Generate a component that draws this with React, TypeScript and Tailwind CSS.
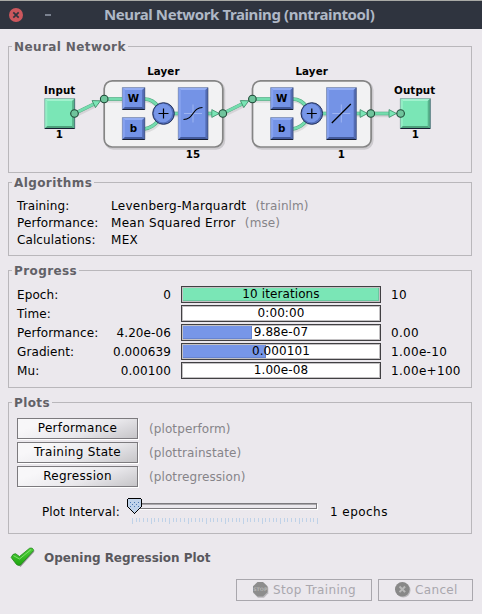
import React from "react";

function Panel({ title, className, children }: { title: string; className: string; children: React.ReactNode }) {
  return (
    <section className={`relative mx-2 w-[464px] shrink-0 border border-[#b9b7bb] ${className}`}>
      <h2 className="absolute -top-[7px] left-[3px] bg-[#ebe8ed] pr-[2px] pl-[2px] text-[12px] leading-[15px] font-bold tracking-[0.4px] text-[#626167]">
        {title}
      </h2>
      {children}
    </section>
  );
}

function Bevel({ x, y, w, h, tone }: { x: number; y: number; w: number; h: number; tone: "green" | "blue" }) {
  const c =
    tone === "green"
      ? { face: "#7ae6b6", light: "#a0f2cd", left: "#93eec5", dark: "#58b48c", bottom: "#4da07b" }
      : { face: "#7493e6", light: "#93adf3", left: "#86a2ef", dark: "#536cb3", bottom: "#435a9c" };
  const b = 2.6;
  return (
    <g>
      <rect x={x} y={y} width={w} height={h} fill={c.face} />
      <path d={`M${x} ${y}h${w}l${-b} ${b}h${-(w - 2 * b)}z`} fill={c.light} />
      <path d={`M${x} ${y}v${h}l${b} ${-b}v${-(h - 2 * b)}z`} fill={c.left} />
      <path d={`M${x + w} ${y}v${h}l${-b} ${-b}v${-(h - 2 * b)}z`} fill={c.dark} />
      <path d={`M${x} ${y + h}h${w}l${-b} ${-b}h${-(w - 2 * b)}z`} fill={c.bottom} />
      <path d={`M${x} ${y + h}H${x + w}`} stroke="#151c30" strokeWidth="1" />
      <path d={`M${x + w} ${y}V${y + h}`} stroke="#33405f" strokeWidth="0.6" />
      <path d={`M${x} ${y + h}V${y}H${x + w}`} fill="none" stroke="#77808f" strokeWidth="0.5" />
    </g>
  );
}

function Wire({ d }: { d: string }) {
  return (
    <g fill="none">
      <path d={d} stroke="#000" strokeOpacity="0.09" strokeWidth="3.5" transform="translate(1.2 2)" />
      <path d={d} stroke="#4fa37c" strokeWidth="3.6" />
      <path d={d} stroke="#74dcae" strokeWidth="2.6" />
    </g>
  );
}

function Port({ x, y }: { x: number; y: number }) {
  return <circle cx={x} cy={y} r="3.8" fill="#6fc49c" stroke="#1f4a38" strokeWidth="1.1" />;
}

function Arrow({ x, y, angle = 0 }: { x: number; y: number; angle?: number }) {
  return (
    <path
      d="M0 0L-7.500 -3.900V3.900Z"
      transform={`translate(${x} ${y}) rotate(${angle})`}
      fill="#7ae6b6"
      stroke="#3f8a68"
      strokeWidth="0.8"
    />
  );
}

function Layer({ x, size, curve }: { x: number; size: string; curve: string }) {
  return (
    <g transform={`translate(${x} 0)`}>
      <rect x="1.5" y="82" width="118.5" height="66.5" rx="8" fill="none" stroke="#000" strokeOpacity="0.13" strokeWidth="2.5" />
      <rect x="0.2" y="80.8" width="118.6" height="66.2" rx="8" fill="#f2f2f3" stroke="#858585" strokeWidth="1.7" />
      <Wire d="M0 99H20" />
      <Wire d="M40 99C48 99 51 103 56 108" />
      <Wire d="M40 129C48 128 51 124 56 119" />
      <Wire d="M68 113.5H75" />
      <Wire d="M103 113.5H109" />
      <Bevel x={18.3} y={87.5} w={22.5} h={22} tone="blue" />
      <Bevel x={18.3} y={117.5} w={22.5} h={22} tone="blue" />
      <text x="29.5" y="102" textAnchor="middle">W</text>
      <text x="29.5" y="132" textAnchor="middle">b</text>
      <circle cx="59.5" cy="113.5" r="10.8" fill="#5470bd" stroke="#24325c" strokeWidth="1" />
      <circle cx="59" cy="113" r="9.2" fill="#7796e8" />
      <path d="M54.5 113.5h10M59.5 108.5v10" stroke="#000" strokeWidth="1.2" />
      <Bevel x={74.2} y={87.5} w={29.8} h={52} tone="blue" />
      <path d="M80 113.5h18M89 104.500v18" stroke="#a7bcf5" strokeWidth="0.8" />
      <path d={curve} fill="none" stroke="#000" strokeWidth="1.2" />
      <Arrow x={115.300} y={113.5} />
      <text x="59.400" y="75" textAnchor="middle">Layer</text>
      <text x="89" y="158" textAnchor="middle">{size}</text>
    </g>
  );
}

function NetworkDiagram() {
  return (
    <svg
      className="block h-[125px] w-[462px] text-[10.3px] font-bold"
      viewBox="9 47 462 125"
      fill="#000"
    >
      <Layer x={104} size="15" curve="M79.500 119.500C90 119.500 88 107.500 98.500 107.500" />
      <Layer x={252.300} size="1" curve="M79.500 123L98.500 104" />
      <Bevel x={44.7} y={98.5} w={30} h={30} tone="green" />
      <text x="59.700" y="94" textAnchor="middle">Input</text>
      <text x="59.400" y="138" textAnchor="middle">1</text>
      <Wire d="M74.500 113.500L95 103.500" />
      <Arrow x={100.500} y={100.800} angle={-26} />
      <Port x={74.5} y={113.5} />
      <Port x={104.2} y={99} />
      <Wire d="M222.700 113.500L243 103.500" />
      <Arrow x={248.800} y={100.800} angle={-26} />
      <Port x={222.800} y={113.5} />
      <Port x={252.400} y={99} />
      <Wire d="M371 113.500H390" />
      <Arrow x={396.500} y={113.5} />
      <Bevel x={400.300} y={98.5} w={30} h={30} tone="green" />
      <Port x={370.800} y={113.5} />
      <Port x={400.600} y={113.5} />
      <text x="414.700" y="94" textAnchor="middle">Output</text>
      <text x="415.300" y="138" textAnchor="middle">1</text>
    </svg>
  );
}

function AlgorithmRow({ label, value, note }: { label: string; value: string; note?: string }) {
  return (
    <div className="flex h-[17px]">
      <span className="w-[94px]">{label}</span>
      <span className="tracking-[0.3px]">{value}</span>
      {note && <span className="ml-[9px] text-[#868489]">{note}</span>}
    </div>
  );
}

type Metric = { label: string; start: string; text: string; end: string; fill: number; green?: boolean };

const metrics: Metric[] = [
  { label: "Epoch:", start: "0", text: "10 iterations", end: "10", fill: 196, green: true },
  { label: "Time:", start: "", text: "0:00:00", end: "", fill: 0 },
  { label: "Performance:", start: "4.20e-06", text: "9.88e-07", end: "0.00", fill: 69 },
  { label: "Gradient:", start: "0.000639", text: "0.000101", end: "1.00e-10", fill: 83 },
  { label: "Mu:", start: "0.00100", text: "1.00e-08", end: "1.00e+100", fill: 0 },
];

function MetricRow({ label, start, text, end, fill, green }: Metric) {
  return (
    <div className="flex h-[17px] leading-[19px]">
      <span className="w-[84px]">{label}</span>
      <span className="w-[70px] text-right">{start}</span>
      <div className="relative ml-[10px] h-[17px] w-[200px] border border-[#414043] bg-white">
        <div className="h-[15px] border border-[#c3c1c3]">
          <div
            className={`h-[13px] ${green ? "bg-[#7ae6b6] shadow-[inset_-1px_-1px_0_#69c9a0]" : "bg-[#7796e8] shadow-[inset_-1px_-1px_0_#6784d1]"}`}
            style={{ width: fill }}
          />
        </div>
        <span className="absolute inset-0 text-center leading-[15px]">{text}</span>
      </div>
      <span className="ml-[10px] tracking-[0.3px]">{end}</span>
    </div>
  );
}

function PlotRow({ label, note }: { label: string; note: string }) {
  return (
    <div className="flex h-[21px] items-center">
      <button className="h-[21px] w-[121px] border border-[#7c7a7e] bg-linear-160 from-[#f8f7f9] from-20% via-[#e9e8ec] via-60% to-[#c6c5c8] text-center leading-[19px] tracking-[0.3px] shadow-[1px_1px_0_#fff]">
        {label}
      </button>
      <span className="ml-[11px] pt-[2px] text-[#868489]">{note}</span>
    </div>
  );
}

function IntervalSlider() {
  const ticks = Array.from({ length: 51 }, (_, i) => i);
  return (
    <svg className="block h-[28px] w-[194px]" viewBox="126 497 194 28" shapeRendering="crispEdges">
      <path d="M135 509.500H317.500V504" fill="none" stroke="#fff" />
      <rect x="134.500" y="503.500" width="182" height="5" fill="#ebe8ed" stroke="#7c7a7e" />
      <path d="M135 504.500H316" stroke="#aaa8ac" />
      {ticks.map((i) => (
        <rect key={i} x={Math.round(132 + i * 3.7)} y="518" width="1" height={i % 5 === 0 ? 6 : 4} fill="#bfd2e8" />
      ))}
      <path d="M128.500 498.500H140.500L141.500 499.500V506.500L134.500 513.500L127.500 506.500V499.500Z" fill="#c0d3ea" stroke="#000" />
      <path
        d="M130 502h1M134 502h1M138 502h1M132 504h1M136 504h1M130 506h1M134 506h1M138 506h1"
        transform="translate(0 .5)"
        stroke="#4b78b4"
      />
    </svg>
  );
}

function CheckIcon() {
  return (
    <svg className="block h-[22px] w-[26px]" viewBox="10 546 26 22">
      <defs>
        <linearGradient id="check" x1="0" y1="0" x2="0" y2="1">
          <stop offset="0" stopColor="#4fd03a" />
          <stop offset="1" stopColor="#1fa511" />
        </linearGradient>
      </defs>
      <path d="M12.500 559L15.500 555.500L20 558.500L30.500 549L34.500 551.500L20.500 567Z" fill="#555" opacity=".55" />
      <path d="M11.200 557.500Q12.500 553.500 15.500 553.700L19.500 556.500L29.500 548.300Q33 547.300 33.700 550.500L20.500 565Q18.500 566 16.500 564.500Z" fill="url(#check)" stroke="#208419" strokeWidth=".8" />
      <path d="M13.500 555.700L19.500 559L31 549.600" fill="none" stroke="#84e474" strokeWidth=".9" />
    </svg>
  );
}

function StopIcon() {
  return (
    <svg className="block h-[18px] w-[18px]" viewBox="0 0 18 18">
      <path d="M6 2.300h6l4.300 4.500v5.500L12 16.800H6L1.800 12.500V7z" fill="#bbb9bd" />
      <path d="M5.500 1h5.500L15.500 5.300v6L11 15.500H5.500L1 11.300v-6z" fill="#8d8d8d" />
      <text x="8.300" y="10" textAnchor="middle" fontSize="4.800" fontWeight="bold" fill="#b5b5b5" letterSpacing="0">STOP</text>
    </svg>
  );
}

function CancelIcon() {
  return (
    <svg className="block h-[18px] w-[18px]" viewBox="0 0 18 18">
      <circle cx="9.300" cy="9.300" r="7.200" fill="#bbb9bd" />
      <circle cx="8.300" cy="8.300" r="7.300" fill="#888" />
      <path d="M5.500 5.500l5.600 5.600M11.100 5.500l-5.600 5.600" stroke="#b9b9b9" strokeWidth="2" />
    </svg>
  );
}

export default function App() {
  return (
    <main className="flex h-[614px] w-[482px] flex-col overflow-hidden bg-[#ebe8ed] font-['DejaVu_Sans',sans-serif] text-[12px] leading-[17px] tracking-[0.1px] whitespace-nowrap text-black">
      <header className="flex h-[29px] shrink-0 items-center border-t border-[#a9aaa6] bg-[#2f343f]">
        <svg className="ml-[8px] block h-4 w-[50px] shrink-0" viewBox="8 7 50 16">
          <circle cx="16" cy="15" r="7" fill="#cc575d" />
          <path d="M13.300 12.300l5.400 5.400M18.700 12.300l-5.400 5.400" stroke="#2f343f" strokeWidth="1.700" />
          <path d="M45 15h6" stroke="#8f97a5" strokeWidth="1.600" />
        </svg>
        <h1 className="-mt-[2px] ml-[46px] font-['Noto_Sans',sans-serif] text-[15px] leading-[20px] font-bold tracking-[-0.4px] text-[#afb8c6]">
          Neural Network Training (nntraintool)
        </h1>
      </header>

      <Panel title="Neural Network" className="mt-[17px] h-[127px]">
        <NetworkDiagram />
      </Panel>

      <Panel title="Algorithms" className="mt-[9px] h-[74px] pt-[15px] pl-[8px]">
        <AlgorithmRow label="Training:" value="Levenberg-Marquardt" note="(trainlm)" />
        <AlgorithmRow label="Performance:" value="Mean Squared Error" note="(mse)" />
        <AlgorithmRow label="Calculations:" value="MEX" />
      </Panel>

      <Panel title="Progress" className="mt-[14px] h-[118px] pt-[15px] pl-[8px]">
        <div className="flex flex-col gap-[2px]">
          {metrics.map((m) => (
            <MetricRow key={m.label} {...m} />
          ))}
        </div>
      </Panel>

      <Panel title="Plots" className="mt-[14px] h-[132px] pt-[15px] pl-[8px]">
        <div className="flex flex-col gap-[3px]">
          <PlotRow label="Performance" note="(plotperform)" />
          <PlotRow label="Training State" note="(plottrainstate)" />
          <PlotRow label="Regression" note="(plotregression)" />
        </div>
        <div className="mt-[10px] flex">
          <span className="ml-[25px] w-[84px] pt-[7px]">Plot Interval:</span>
          <IntervalSlider />
          <span className="ml-[10px] pt-[7px] tracking-[0.45px]">1 epochs</span>
        </div>
      </Panel>

      <div className="mt-[12px] ml-[10px] flex h-[22px] items-center">
        <CheckIcon />
        <span className="mt-[2px] ml-[8px] font-bold tracking-[-0.03px] text-[#59585d]">Opening Regression Plot</span>
      </div>

      <footer className="mt-[11px] mr-[9px] flex justify-end gap-[6px] tracking-[0.35px] text-[#a9a7ad]">
        <button className="flex h-[22px] w-[136px] items-center border border-[#a9a7ad] pl-[15px]">
          <StopIcon />
          <span className="mt-px ml-[3px]">Stop Training</span>
        </button>
        <button className="flex h-[22px] w-[95px] items-center border border-[#a9a7ad] pl-[15px]">
          <CancelIcon />
          <span className="mt-px ml-[3px]">Cancel</span>
        </button>
      </footer>
    </main>
  );
}
